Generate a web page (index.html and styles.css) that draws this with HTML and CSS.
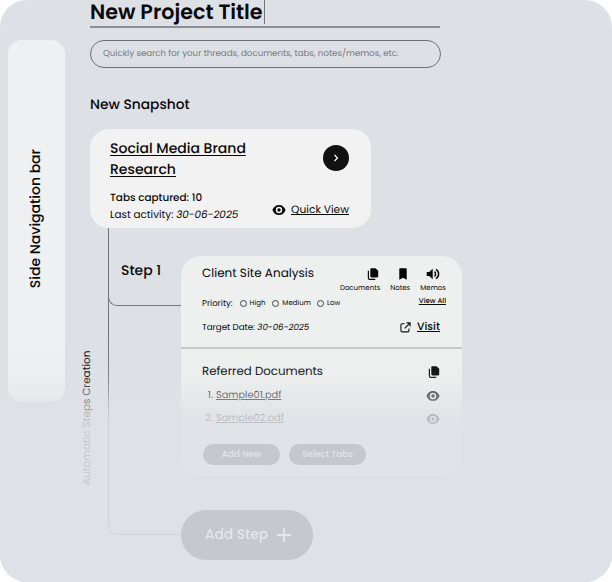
FILE: index.html
```html
<!DOCTYPE html>
<html lang="en">
<head>
<meta charset="utf-8">
<title>New Project Title</title>
<link rel="stylesheet" href="styles.css">
</head>
<body>
<svg class="defs" width="0" height="0" aria-hidden="true">
  <symbol id="eye" viewBox="0 0 14 12"><path fill="currentColor" fill-rule="evenodd" d="M7 1C3.900 1 1.400 3 .4 6c1 3 3.500 5 6.600 5s5.600-2 6.600-5C12.600 3 10.100 1 7 1Zm0 1.800a3.200 3.200 0 1 1 0 6.400 3.200 3.200 0 0 1 0-6.400Zm0 1.500a1.700 1.700 0 1 0 0 3.400 1.700 1.700 0 0 0 0-3.400Z"/></symbol>
  <symbol id="docs" viewBox="0 0 12 12"><path fill="currentColor" d="M4.500.2h4L11.200 2.800v5.400c0 .7-.4 1.200-1.200 1.200H4.500c-.7 0-1.200-.5-1.200-1.200V1.400C3.300.7 3.800.2 4.500.2Z"/><path fill="none" stroke="currentColor" stroke-width="1.200" d="M1.400 2.800v7.200c0 .8.4 1.300 1.200 1.300h5.700"/></symbol>
</svg>
<div class="app">
  <nav class="sidenav"><span class="sidenav-label">Side Navigation bar</span></nav>
  <main class="main">
    <h1 class="title"><span class="title-text">New Project Title</span></h1>
    <div class="search"><span>Quickly search for your threads, documents, tabs, notes/memos, etc.</span></div>
    <h2 class="heading">New Snapshot</h2>
    <section class="snapshot">
      <div class="snapshot-info">
        <h3 class="snapshot-title">Social Media Brand<br>Research</h3>
        <p class="tabs">Tabs captured: 10</p>
        <p class="activity">Last activity: <em>30-06-2025</em></p>
      </div>
      <div class="snapshot-actions">
        <button class="go" aria-label="Open"><svg width="8" height="10" viewBox="0 0 8 10"><path d="M2.500 2 5.500 5l-3 3" fill="none" stroke="#fff" stroke-width="1.200"/></svg></button>
        <div class="quick"><svg width="14" height="12"><use href="#eye"/></svg><a class="quick-link">Quick View</a></div>
      </div>
    </section>
    <section class="tree">
      <div class="tree-label"><span>Automatic Steps Creation</span></div>
      <div class="trunk"><div class="branch"><span class="step">Step 1</span></div></div>
      <div class="steps">
        <article class="card">
          <div class="card-top">
            <div class="details">
              <h3 class="card-title">Client Site Analysis</h3>
              <div class="priority"><span class="priority-label">Priority:</span>
                <span class="option high"><i class="radio"></i><span>High</span></span>
                <span class="option medium"><i class="radio"></i><span>Medium</span></span>
                <span class="option low"><i class="radio"></i><span>Low</span></span>
              </div>
              <p class="target">Target Date: <em>30-06-2025</em></p>
            </div>
            <div class="tools">
              <div class="tool-row">
                <div class="tool tool-docs"><svg width="12" height="12"><use href="#docs"/></svg><span>Documents</span></div>
                <div class="tool tool-notes"><svg width="12" height="12" viewBox="0 0 12 12"><path d="M2.300 1.200c0-.6.4-1 1-1h5.400c.6 0 1 .4 1 1v10.600L6 9.800l-3.700 2Z"/></svg><span>Notes</span></div>
                <div class="tool tool-memos"><svg width="14" height="12" viewBox="0 0 14 12"><path d="M.7 3.900h2.500L6.700.8v10.400L3.200 8.100H.7Z"/><path d="M8.500 3.600c1.400 1.200 1.400 3.600 0 4.800M10 1.400c3.500 2 3.500 7.200 0 9.200" fill="none" stroke="#000" stroke-width="1.400"/></svg><span>Memos</span></div>
              </div>
              <a class="view-all">View All</a>
              <div class="visit"><svg width="11" height="11" viewBox="0 0 11 11" fill="none" stroke="#111" stroke-width="1.100"><path d="M4.500 1.700H2.200C1.400 1.700.9 2.200.9 3v5.600c0 .8.500 1.300 1.300 1.300h5.500c.8 0 1.300-.5 1.300-1.300V6.500M6.500.9h3.600v3.600M10 1 4.700 6.300"/></svg><a class="visit-link">Visit</a></div>
            </div>
          </div>
          <div class="card-bottom">
            <div class="row docs-head"><h3 class="docs-title">Referred Documents</h3><svg width="12" height="12"><use href="#docs"/></svg></div>
            <div class="row doc"><span class="num">1.</span><a class="file">Sample01.pdf</a><svg width="14" height="12"><use href="#eye"/></svg></div>
            <div class="row doc"><span class="num">2.</span><a class="file">Sample02.pdf</a><svg width="14" height="12"><use href="#eye"/></svg></div>
            <div class="buttons"><button class="pill">Add New</button><button class="pill">Select Tabs</button></div>
          </div>
        </article>
        <button class="add-step"><span>Add Step</span><svg width="14" height="14" viewBox="0 0 14 14"><path d="M7 0v14M0 7h14" stroke="#fff" stroke-width="2"/></svg></button>
      </div>
    </section>
  </main>
  <div class="fade"></div>
</div>
</body>
</html>
```

FILE: styles.css
```css
* { box-sizing: border-box; }
body { margin: 0; background: #fff; color: #090909; font-family: Poppins, Inter, sans-serif; text-rendering: geometricPrecision; }
h1, h2, h3, p { margin: 0; font-weight: 500; }
button { border: 0; padding: 0; font: inherit; }
svg { display: block; flex: none; }
a { text-decoration: underline; text-decoration-thickness: 1px; text-underline-offset: 1px; }
.defs { position: absolute; }
.app { position: relative; display: flex; width: 612px; height: 582px; overflow: hidden; border-radius: 27px; background: #dde0e5; white-space: nowrap; }

.sidenav { display: flex; align-items: center; justify-content: center; flex: none; width: 57px; height: 362px; margin: 40px 0 0 8px; border-radius: 14px; background: #eff0f2; }
.sidenav-label { writing-mode: vertical-rl; transform: rotate(180deg); font-size: 14px; font-weight: 500; line-height: 20px; margin: 0 4px 4px 0; }

.main { width: 372px; margin-left: 25px; }
.title { display: flex; width: 350px; height: 28px; border-bottom: 2px solid #8c9095; font-size: 20.7px; line-height: 25px; font-weight: 600; }
.title-text { height: 24px; padding-right: 1px; border-right: 1px solid #777; }
.search { display: flex; align-items: center; width: 351px; height: 28px; margin-top: 12px; padding-left: 12px; border: 1px solid #6d7074; border-radius: 14px; color: #77797d; font-size: 8.65px; }
.heading { margin-top: 26px; height: 20px; font-size: 13.8px; line-height: 21px; }

.snapshot { display: flex; justify-content: space-between; width: 281px; height: 99px; margin-top: 15px; padding: 9px 22px 0 20px; border-radius: 19px; background: #f2f2f2; }
.snapshot-title { font-size: 14px; line-height: 21px; text-decoration: underline; text-decoration-thickness: 1px; text-underline-offset: 2px; }
.tabs { margin-top: 9px; font-size: 10.4px; line-height: 17px; }
.activity { font-size: 10.4px; line-height: 17px; font-weight: 400; }
.snapshot-actions { display: flex; flex-direction: column; align-items: flex-end; }
.go { display: flex; align-items: center; justify-content: center; width: 26px; height: 26px; margin-top: 7px; border-radius: 50%; background: #111; }
.quick { display: flex; align-items: center; gap: 5px; height: 16px; margin-top: 31px; font-size: 10.7px; }

.tree { display: flex; margin-left: -10px; }
.tree-label { display: flex; width: 28px; height: 135px; margin-top: 122px; }
.tree-label span { writing-mode: vertical-rl; transform: rotate(180deg); font-size: 10.45px; line-height: 14px; font-weight: 400; }
.trunk { width: 73px; height: 307px; border: solid #74777b; border-width: 0 0 1px 1px; border-bottom-left-radius: 9px; }
.branch { height: 78px; margin-left: -1px; border: solid #74777b; border-width: 0 0 1px 1px; border-bottom-left-radius: 9px; padding: 32px 0 0 12px; }
.step { display: block; font-size: 13.9px; line-height: 21px; font-weight: 500; }

.card { width: 281px; height: 220px; margin-top: 28px; border-radius: 20px; background: #eef0ef; }
.card-top { display: flex; justify-content: space-between; height: 93px; border-bottom: 2px solid #c6c8c8; padding: 8px 16px 0 21px; }
.card-title { font-size: 12px; line-height: 19px; font-weight: 400; }
.priority { display: flex; align-items: center; height: 12px; margin-top: 14px; font-size: 8.5px; }
.option { display: flex; align-items: center; gap: 3px; font-size: 7px; line-height: 12px; }
.option span { padding-top: 1px; }
.radio { width: 7px; height: 7px; border: 1px solid #444; border-radius: 50%; }
.high, .medium { margin-left: 7px; }
.low { margin-left: 6px; }
.target { margin-top: 12px; font-size: 8.7px; line-height: 14px; font-weight: 400; }
.tools { display: flex; flex-direction: column; align-items: flex-end; margin-left: -10px; }
.tool-row { display: flex; gap: 10px; margin-top: 4px; }
.tool { display: flex; flex-direction: column; align-items: center; gap: 4px; font-size: 7px; line-height: 10px; }
.tool-docs svg { margin-left: 26px; }
.tool-notes svg { margin-left: 6px; }
.view-all { margin-top: 3px; font-size: 7px; line-height: 10px; font-weight: 500; }
.visit { display: flex; align-items: center; gap: 6px; height: 16px; margin: 12px 6px 0 0; font-size: 10.8px; font-weight: 500; }

.card-bottom { padding: 13px 22px 0 21px; }
.row { display: flex; align-items: center; justify-content: space-between; }
.docs-head { height: 20px; }
.docs-title { font-size: 11.8px; font-weight: 400; }
.doc { height: 23px; font-size: 9.8px; }
.docs-head + .doc { margin-top: 2px; }
.num { width: 11px; text-align: right; }
.file { margin: 0 auto 0 3px; }
.buttons { display: flex; gap: 9px; margin: 14px 0 0 1px; }
.pill { width: 77px; height: 21px; border-radius: 11px; background: #111; color: #fff; font-size: 8.8px; font-weight: 500; }
.add-step { display: flex; align-items: center; justify-content: center; gap: 9px; width: 132px; height: 50px; margin-top: 34px; padding-left: 2px; border-radius: 25px; background: #111; color: #fff; font-size: 13.8px; font-weight: 500; }

/* Veil over the lower part of the screen */
.fade { position: absolute; inset: 340px 0 0; pointer-events: none; background: linear-gradient(rgba(222, 225, 230, 0), rgba(222, 225, 230, .08) 35px, rgba(222, 225, 230, .46) 55px, rgba(222, 225, 230, .82) 76px, rgba(222, 225, 230, .88) 92px); }
```
